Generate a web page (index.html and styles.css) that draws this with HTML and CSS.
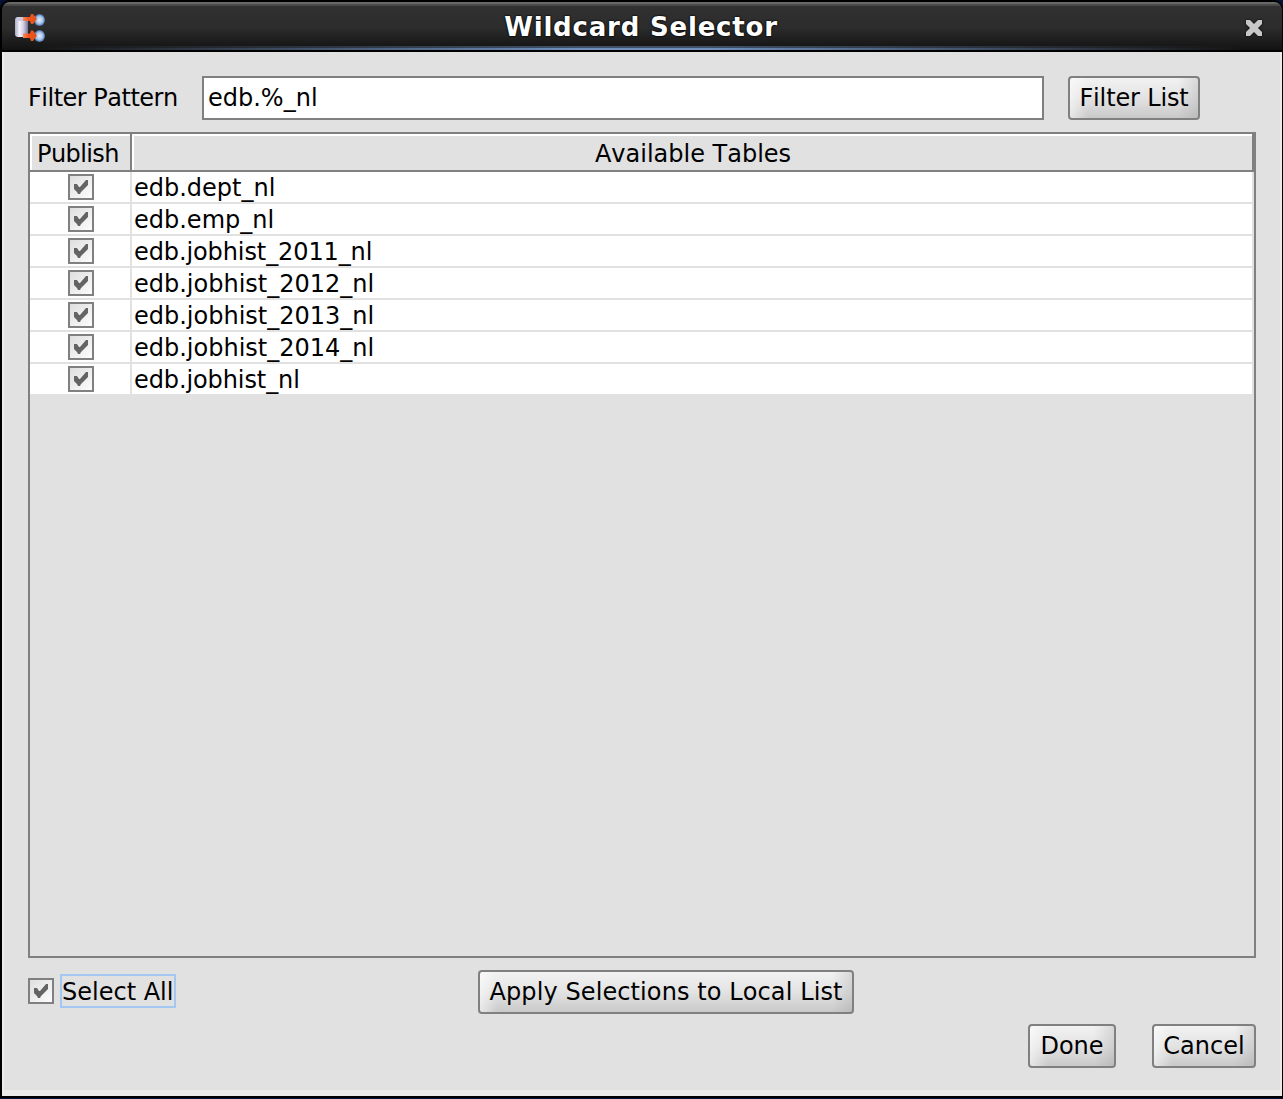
FILE: index.html
```html
<!DOCTYPE html>
<html lang="en">
<head>
<meta charset="utf-8">
<title>Wildcard Selector</title>
<link rel="stylesheet" href="styles.css">
</head>
<body>
<svg class="defs" width="0" height="0" aria-hidden="true">
  <symbol id="check" viewBox="0 0 26 26"><path d="M6 10h3l2 3h1l6-7h2v5l-7 7-1 2h-2l-1-2-3-3z" fill="#646464"/></symbol>
</svg>
<div class="window">
  <header class="titlebar">
    <svg class="app-icon" width="32" height="30" viewBox="0 0 32 30">
      <defs>
        <linearGradient id="cyl"><stop offset="0" stop-color="#a9a9c8"/><stop offset=".35" stop-color="#f4f3fb"/><stop offset=".65" stop-color="#d0cde2"/><stop offset="1" stop-color="#77739c"/></linearGradient>
        <radialGradient id="ball"><stop offset="0" stop-color="#e6f0fa"/><stop offset=".6" stop-color="#a8c5ea"/><stop offset="1" stop-color="#4a70a8"/></radialGradient>
        <linearGradient id="arrow"><stop offset="0" stop-color="#ee8b62"/><stop offset=".4" stop-color="#f2541a"/><stop offset="1" stop-color="#e0531f"/></linearGradient>
      </defs>
      <rect x="1" y="5" width="13" height="20" rx="3" fill="url(#cyl)"/>
      <ellipse cx="7.500" cy="7" rx="5.500" ry="2" fill="#c9c6df"/>
      <ellipse cx="25.500" cy="8" rx="5.500" ry="6" fill="url(#ball)"/>
      <ellipse cx="25.500" cy="24" rx="5.500" ry="6" fill="url(#ball)"/>
      <path d="M9 5h7l1-3h2l4 5-4 5h-2l-1-3H9z M9 21.500h7l1-3h2l4 5-4 5.500h-2l-1-3H9z" fill="url(#arrow)"/>
    </svg>
    <h1 class="title">Wildcard Selector</h1>
    <svg class="close" width="16" height="16" viewBox="0 0 16 16"><path d="M0 0h4l4 4 4-4h4v4l-4 4 4 4v4h-4l-4-4-4 4H0v-4l4-4-4-4z" fill="#c8c8c8"/></svg>
  </header>
  <main class="content">
    <div class="filter">
      <label class="filter-label t-pattern" for="pattern">Filter Pattern</label>
      <div class="field" id="pattern"><span class="t-value">edb.%_nl</span></div>
      <div class="btn btn-filter"><span class="t-filter">Filter List</span></div>
    </div>
    <div class="table">
      <div class="thead">
        <div class="th"><span class="t-publish">Publish</span></div>
        <div class="th"><span>Available Tables</span></div>
      </div>
      <div class="row"><div class="cell"><svg class="box"><use href="#check"/></svg></div><div class="cell name"><span>edb.dept_nl</span></div></div>
      <div class="row"><div class="cell"><svg class="box"><use href="#check"/></svg></div><div class="cell name"><span>edb.emp_nl</span></div></div>
      <div class="row"><div class="cell"><svg class="box"><use href="#check"/></svg></div><div class="cell name"><span class="t-2011">edb.jobhist_2011_nl</span></div></div>
      <div class="row"><div class="cell"><svg class="box"><use href="#check"/></svg></div><div class="cell name"><span>edb.jobhist_2012_nl</span></div></div>
      <div class="row"><div class="cell"><svg class="box"><use href="#check"/></svg></div><div class="cell name"><span>edb.jobhist_2013_nl</span></div></div>
      <div class="row"><div class="cell"><svg class="box"><use href="#check"/></svg></div><div class="cell name"><span>edb.jobhist_2014_nl</span></div></div>
      <div class="row"><div class="cell"><svg class="box"><use href="#check"/></svg></div><div class="cell name"><span class="t-2011">edb.jobhist_nl</span></div></div>
    </div>
    <div class="apply">
      <svg class="box"><use href="#check"/></svg>
      <div class="focus"><span>Select All</span></div>
      <div class="btn btn-apply"><span class="t-apply">Apply Selections to Local List</span></div>
    </div>
    <div class="actions">
      <div class="btn btn-done"><span>Done</span></div>
      <div class="btn btn-cancel"><span>Cancel</span></div>
    </div>
  </main>
</div>
</body>
</html>
```
FILE: styles.css
```css
* { box-sizing: border-box; }
body {
  margin: 0;
  height: 1099px;
  overflow: hidden;
  background: #071335;
  color: #000;
  font: 24px/32px "DejaVu Sans", sans-serif;
  font-kerning: none;
  font-variant-ligatures: none;
  white-space: nowrap;
}
.defs { display: block; height: 0; }
.window {
  height: 1098px;
  padding: 2px 1px 2px 2px;
  background: #000;
  border-radius: 9px 9px 0 0;
  display: flex;
  flex-direction: column;
}
.titlebar {
  height: 50px;
  flex: none;
  display: grid;
  grid-template-columns: 60px 1fr 60px;
  border-bottom: 2px solid #000;
  border-radius: 8px 8px 0 0;
  background:
    linear-gradient(90deg, transparent 2%, #6f8fbd 45%, #6f8fbd 55%, transparent 97%) 0 46px / 100% 2px no-repeat,
    linear-gradient(90deg, transparent 2%, #3f5068 45%, #3f5068 55%, transparent 97%) 0 44px / 100% 2px no-repeat,
    linear-gradient(#686868 0 2px, #4a4a4a 2px 4px, #313131 4px, #2c2c2c 26px, #171717 44px, #121212);
}
.app-icon { margin: 10px 0 0 12px; }
.title {
  margin: 10px 2px 0 0;
  font-size: 26px;
  line-height: 30px;
  letter-spacing: .8px;
  text-align: center;
  color: #fff;
  text-shadow: 0 0 2px #000, 0 0 2px #000;
}
.close { margin: 18px 0 0 24px; overflow: visible; filter: drop-shadow(0 0 1px #000); }
.content {
  flex: 1;
  display: flex;
  flex-direction: column;
  padding: 24px 24px 0;
  background: #e1e1e1;
  border: solid #ebebea;
  border-width: 0 2px 6px;
}
.filter { display: flex; height: 44px; margin-bottom: 12px; }
.filter-label { width: 174px; padding-top: 6px; }
.field {
  width: 842px;
  margin-right: 24px;
  padding: 4px;
  border: 2px solid #808080;
  background: #fff;
}
.btn {
  height: 44px;
  flex: none;
  padding-top: 4px;
  text-align: center;
  border: 2px solid #808080;
  border-radius: 4px;
  background:
    linear-gradient(90deg, rgba(255,255,255,.55), transparent 18px) padding-box,
    linear-gradient(270deg, rgba(150,150,150,.28), transparent 20px) padding-box,
    linear-gradient(#f2f2f2, #e3e3e3 50%, #c9c9c9) padding-box;
}
.btn-filter { width: 132px; }
.table {
  width: 1228px;
  height: 826px;
  border: 2px solid #808080;
}
.thead, .row { display: grid; grid-template-columns: 102px 1122px; }
.thead {
  height: 38px;
  grid-template-columns: 102px 1120px;
  border-right: 2px solid #808080;
}
.th {
  padding: 4px 0 0 2px;
  text-align: center;
  box-shadow: inset 0 -2px #808080, inset 2px 2px #fff;
}
.th:first-child { padding: 4px 6px 0 0; box-shadow: inset -2px -2px #808080, inset 2px 2px #fff; }
.row { height: 32px; grid-template-rows: 32px; }
.cell { border: solid #e1e1e1; border-width: 0 2px 2px 0; background: #fff; }
.cell:first-child { padding: 2px 0 0 38px; }
.row:last-child .cell { border-bottom-width: 0; }
.row:last-child { height: 30px; grid-template-rows: 30px; }
.name { padding-left: 2px; }
.box {
  display: block;
  flex: none;
  width: 26px;
  height: 26px;
  background: linear-gradient(135deg, #dcdcdc, #fff);
  box-shadow: inset 0 0 0 2px #808080;
}
.apply { display: flex; height: 44px; margin: 12px 0 10px; }
.apply .box { margin-top: 8px; }
.focus {
  width: 116px;
  height: 34px;
  margin: 4px 302px 0 6px;
  border: 2px solid #a3c7f0;
}
.btn-apply { width: 376px; }
.actions { display: flex; justify-content: flex-end; gap: 36px; }
.btn-done { width: 88px; }
.btn-cancel { width: 104px; }

/* per-label tracking */
.t-pattern { letter-spacing: -.5px; }
.t-value { letter-spacing: 0; }
.t-filter { letter-spacing: -.15px; }
.t-publish { letter-spacing: -.6px; }
.t-2011 { letter-spacing: -.1px; }
.t-apply { letter-spacing: .1px; }
```
